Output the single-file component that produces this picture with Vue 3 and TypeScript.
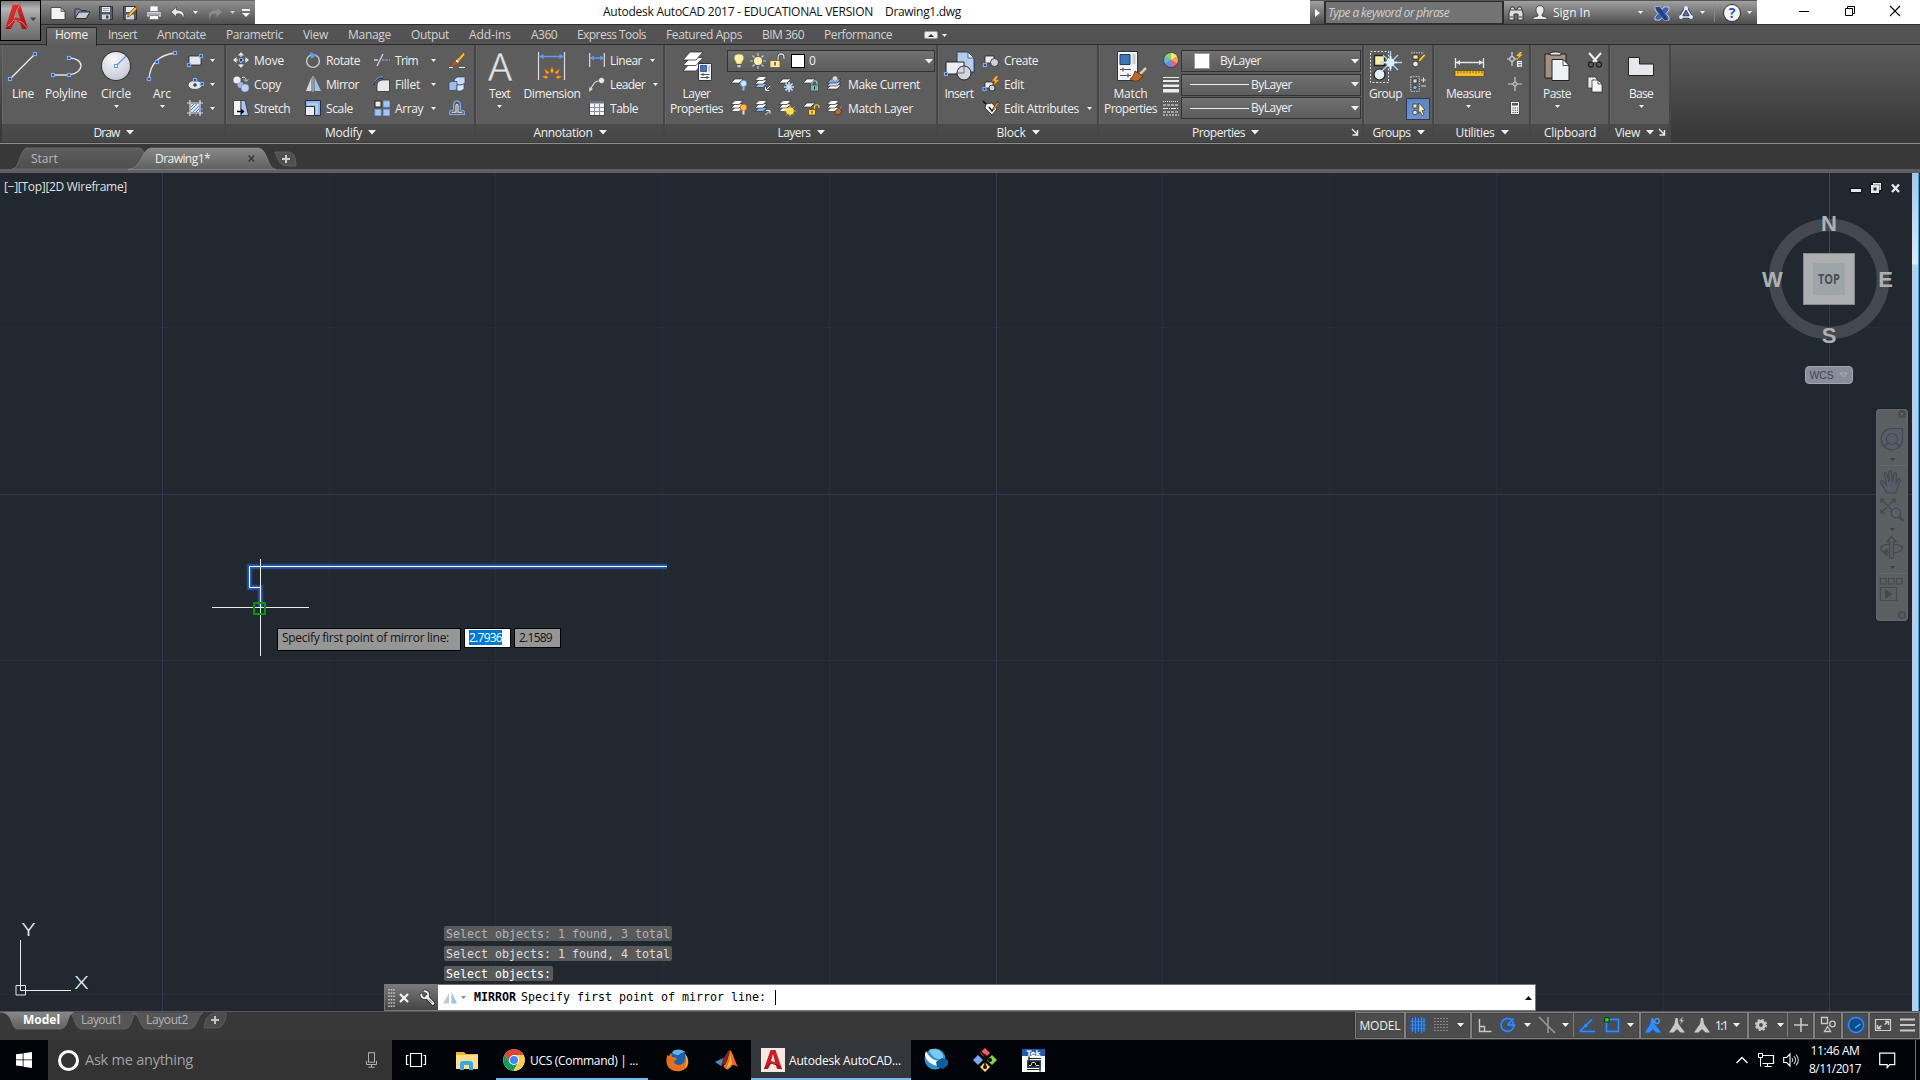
<script setup lang="ts">
import { h } from 'vue'

// Stretches or tightens a label so that it occupies the given width in pixels.
const vFit = {
  mounted(el: HTMLElement, binding: { value: number }) {
    const n = (el.textContent || '').length
    const w = el.getBoundingClientRect().width
    if (n > 0 && binding.value) el.style.letterSpacing = `${(binding.value - w) / n}px`
  },
}

const sq = (x: number, y: number) =>
  `<rect x="${x - 1.5}" y="${y - 1.5}" width="3" height="3" fill="#3a3f4a" stroke="#78aaff" stroke-width="1.2"/>`
const sheet = (x: number, y: number, f = '#fff', w = 8) =>
  `<path d="M${x + 4} ${y}h${w}l-4 4h-${w}z" fill="${f}" stroke="#333" stroke-width=".7"/>`
const sheets = (x: number, y: number, f = '#fff') => sheet(x, y + 7, f) + sheet(x, y + 3.5) + sheet(x, y)

const icons: Record<string, string> = {
  dd: '<path d="M0 0h5L2.5 3z" fill="#f0f0f0"/>',
  ddDark: '<path d="M0 0h5L2.5 3z" fill="#888"/>',
  ddBig: '<path d="M0 0h8L4 4.5z" fill="#f0f0f0"/>',
  launch: '<path d="M1 1l5 5M6.500 2v5h-5" fill="none" stroke="#eee" stroke-width="1.4"/>',
  logo: '<defs><linearGradient id="rg" x1="0" y1="0" x2="1" y2="1"><stop offset="0" stop-color="#e8403c"/><stop offset="1" stop-color="#9a1016"/></linearGradient></defs><path d="M0 26L8 1h7l8 25h-6l-2-6-5-2-4 8z" fill="url(#rg)"/><path d="M9 14L12 6l3 10z" fill="#8c8c8c"/><path d="M0 26l9-9 8 2 6 7M8 1l7 1-3 5-3 9" fill="none" stroke="#f0706a" stroke-width="1"/><path d="M0 26l3-3 3 3z" fill="#8c1014"/>',
  new: '<path d="M1 2.500h10l4 4v8H1z" fill="#f3f4f8" stroke="#333" stroke-width=".8"/><path d="M11 2.500v4h4z" fill="#aeb2bd" stroke="#333" stroke-width=".6"/>',
  open: '<path d="M1 13V4h5l1 1.500h5V8" fill="#7d8797" stroke="#222" stroke-width=".8"/><path d="M1 13.500L5 7h11l-4 6.500z" fill="#c2cddc" stroke="#222" stroke-width=".9"/>',
  save: '<path d="M1.500 1.500h13v13h-13z" fill="#565b66" stroke="#2e3138"/><path d="M4 2h8v5H4z" fill="#e9ebf0"/><path d="M5 3.500h6M5 5.500h6" stroke="#8e939e" stroke-width=".8"/><path d="M4 9.500h8v5H4z" fill="#cfd3db"/><path d="M8 10.500h2.500v3H8z" fill="#3c414b"/>',
  saveas: '<path d="M1.500 1.500h13v13h-13z" fill="#565b66" stroke="#2e3138"/><path d="M4 2h8v5H4z" fill="#e9ebf0"/><path d="M4 9.500h8v5H4z" fill="#cfd3db"/><path d="M5.500 12l1-3L13 2l2 2-7 7z" fill="#f2c13a" stroke="#6b3b10" stroke-width=".7"/><path d="M13 2l2 2 1-1.500L14.500 1z" fill="#e0552b"/>',
  print: '<path d="M4 1h8v6H4z" fill="#fff" stroke="#777" stroke-width=".7"/><path d="M.7 6.500h14.600v5.500H.7z" fill="#d5d8df" stroke="#555" stroke-width=".7"/><path d="M1.500 9h13" stroke="#7f8591"/><path d="M3.500 10.500h9v4h-9z" fill="#f7f7fa" stroke="#666" stroke-width=".7"/>',
  undo: '<path d="M6.500 2L1 7l5.500 5V9c4-.6 6.500.5 6.500 5 2-4 1.500-9-6.500-9z" fill="#e8eaf0" stroke="#333" stroke-width=".6"/>',
  redo: '<path d="M9.500 2L15 7l-5.500 5V9c-4-.6-6.500.5-6.500 5-2-4-1.500-9 6.500-9z" fill="#8c8c8c" stroke="#777" stroke-width=".6"/>',
  qatmore: '<path d="M0 0h8v2H0zM0 4h8L4 8z" fill="#f4f4f4"/>',
  line: `<path d="M3 31L28 6" stroke="#eee" stroke-width="1.300"/>${sq(3, 31)}${sq(28, 6)}`,
  polyline: `<path d="M3 27h16c16-2 16-17 0-17" fill="none" stroke="#e4e4e4" stroke-width="1.400"/>${sq(3, 27)}${sq(19, 27)}${sq(19, 10)}`,
  circle: `<defs><radialGradient id="cg" cx=".4" cy=".25" r=".9"><stop offset="0" stop-color="#f8f8fb"/><stop offset="1" stop-color="#bfc2ce"/></radialGradient></defs><circle cx="16" cy="18" r="15" fill="#333"/><circle cx="16" cy="18" r="14" fill="url(#cg)"/><path d="M16 18L26 8" stroke="#5c98f5" stroke-width="1.200"/><rect x="14.500" y="16.500" width="3" height="3" fill="#fff" stroke="#5c98f5"/>`,
  arc: `<path d="M3 31C4 16 12 7 29 5" fill="none" stroke="#e4e4e4" stroke-width="1.400"/>${sq(3, 31)}${sq(11, 14)}${sq(29, 5)}`,
  rect: `<path d="M2 4h12v9H2z" fill="#e4e6ee" stroke="#222" stroke-width=".8"/>${sq(2, 13)}${sq(14, 4)}`,
  ellipse: `<ellipse cx="8" cy="9" rx="7" ry="4.500" fill="#e4e6ee" stroke="#333" stroke-width=".7"/><path d="M6 9h4M8 7v4" stroke="#111"/>${sq(8, 4)}${sq(15, 8)}`,
  hatch: '<path d="M3 0v16M0 3h16M13 0v16M0 13h16" stroke="#ddd" stroke-width="1.200"/><path d="M4 4h8v8H4z" fill="#dbe7fb"/><path d="M4 10l6-6M6 12l6-6M4 7l3-3M9 12l3-3" stroke="#4d7fd6"/><path d="M8 16l8-8" stroke="#5f9bff"/>',
  move: '<path d="M8 0l3 3.500H5zM8 16l-3-3.500h6zM0 8l3.500-3v6zM16 8l-3.500 3V5z" fill="#e6e6e6"/><path d="M8 3v10M3 8h10" stroke="#e6e6e6" stroke-dasharray="2 1"/><path d="M6.500 6.500h3v3h-3z" fill="#333" stroke="#78aaff"/>',
  copy: '<circle cx="4" cy="4" r="3.600" fill="#eceef4"/><circle cx="7.500" cy="9" r="3" fill="#9fb6dd"/><circle cx="12" cy="12" r="4" fill="#b9d2f6" stroke="#5f7fb5" stroke-width=".5"/><path d="M9 1.500c3-1 4 1 4 3M11 3.500l2 2 2-2" fill="none" stroke="#ddd"/>',
  stretch: '<path d="M.5.500H8v15H.5z" fill="#f4f5f8" stroke="#222" stroke-width=".7"/><path d="M8 .5h4l3.500 15H8z" fill="#a9c9ec" stroke="#1e2f4d" stroke-width=".8"/><path d="M4 11.500h5" stroke="#000" stroke-width="1.500"/><path d="M8 8.500l3.500 3L8 14.500z"/>',
  rotate: '<circle cx="8" cy="9" r="6.400" fill="none" stroke="#ccc" stroke-width="1.400"/><path d="M5 0l7 3-6 4z" fill="#5f9bf0"/>',
  mirror: '<path d="M6.500 1v14H1z" fill="#d9dadf"/><path d="M9.500 1v14H16z" fill="#9fc1ee"/><path d="M8 0v16" stroke="#eee" stroke-width=".8"/>',
  scale: '<path d="M.5.500h15v15H.5z" fill="#8fb6ea" stroke="#1e2f4d"/><path d="M.5 6.500h9v9h-9z" fill="#e9ebf2" stroke="#333"/><path d="M2 4h10v10" fill="none" stroke="#dbe8fb"/>',
  trim: '<path d="M0 8h4" stroke="#e6e6e6" stroke-width="1.300"/><path d="M8 8h8" stroke="#5f9bff" stroke-width="1.300" stroke-dasharray="2.500 1"/><path d="M3 14L9 2" stroke="#d8d8d8" stroke-width="1.300"/>',
  fillet: '<path d="M3 15.500V10c0-4 3-6 6-6h6.500v11.500z" fill="#e6e8ee" stroke="#222" stroke-width=".7"/><path d="M1 7C2 3 5 1 9 .7" fill="none" stroke="#5f9bff" stroke-width="1.600"/><path d="M0 9c1.500-5 5-7.500 9-7" fill="none" stroke="#222"/>',
  array: '<path d="M1 1h6v6H1z" fill="#e9ebf2" stroke="#222"/><path d="M9.500 1h6v6h-6zM1 9.500h6v6H1zM9.500 9.500h6v6h-6z" fill="#a5c6f5" stroke="#6f9fe6"/>',
  erase: '<path d="M15 0L8 7.500l2 2L16 3z" fill="#f4b72f" stroke="#7a4208" stroke-width=".6"/><path d="M8 7.500l2 2-1.500 1.500-2-2z" fill="#fff"/><path d="M6.500 9l2 2c-.5 3-3 2.500-6 3 0-2 2-4.500 4-5z" fill="#c4491c"/><path d="M0 15.500h4M10 15.500h6" stroke="#eee"/>',
  explode: '<path d="M5 4l3-3h8v6l-3 2H8z" fill="#c5dbf6" stroke="#2f4567" stroke-width=".7"/><path d="M0 7l2-1.500h6V13l-2 1.500H0z" fill="#9dbde8" stroke="#2f4567" stroke-width=".7"/><path d="M8 9h4l3-1v5l-3 2H8z" fill="#d9e7fa" stroke="#2f4567" stroke-width=".7"/>',
  offset: '<path d="M0 14.500h16M.6 14.500v-2c0-1.500 1-2.500 4-2.500V5c0-5.500 6.800-5.500 6.800 0v5c3 0 4 1 4 2.500v2" fill="none" stroke="#78aaff" stroke-width="1.200"/><path d="M2.500 12.300h4.500V6c0-2 2-2 2 0v6.300h4.500" fill="none" stroke="#eee" stroke-width="1.100"/>',
  text: '<text x="16" y="33" text-anchor="middle" font-family="Open Sans" font-size="39" fill="#e0e0e0" stroke="#3c3c3c" stroke-width=".3">A</text>',
  dimension: '<path d="M2.500 4v28M28.500 4v28" stroke="#ddd" stroke-width="1.200"/><path d="M4 8.500h23" stroke="#5f9bff" stroke-width="1.400"/><path d="M3 8.500l4.500-2.500v5zM28 8.500L23.500 6v5z" fill="#5f9bff"/><g fill="#ffb02b" stroke="#d4600f" stroke-width=".7"><path d="M16 19l1.700 4-1.700 2.500-1.700-2.500zM8.500 21l4.500 3-.8 2-2-.5zM23.500 21L19 24l.8 2 2-.5zM6 28.500l5-.7 1 1.500-2 1.500zM26 28.500l-5-.7-1 1.500 2 1.500z"/></g>',
  linear: '<path d="M.7 1v14M15.300 1v14" stroke="#ddd" stroke-width="1.200"/><path d="M2 6h12" stroke="#5f9bff" stroke-width="1.400"/><path d="M1 6l4-2.500v5zM15 6l-4-2.500v5z" fill="#5f9bff"/>',
  leader: '<circle cx="12.500" cy="4.500" r="3" fill="#e8e8ec" stroke="#444" stroke-width=".5"/><path d="M9.500 5C5 5 5 8 2 12" fill="none" stroke="#ddd" stroke-width="1.200"/><path d="M0 16l.5-5 3.500 2z" fill="#ddd"/>',
  table: '<path d="M.5.500h15v15H.5z" fill="#f2f3f6" stroke="#444"/><path d="M.5.500h15v3H.5z" fill="#6c7482"/><path d="M1 7.500h14M1 11.500h14M5.500 4v11M10.500 4v11" stroke="#8b8f98"/>',
  layerprops: '<g stroke="#333" stroke-width=".8" fill="#fff"><path d="M9 15h13l-7 8H2z"/><path d="M9 9.500h13l-7 8H2z"/><path d="M9 4h13l-7 8H2z"/></g><path d="M17.500 15.500h13v17h-13z" fill="#eef1f6" stroke="#333"/><path d="M19.500 17.500h6v6h-6z" fill="#3f74c4" stroke="#1f3a66" stroke-width=".7"/><path d="M27 17.500h2v6h-2z" fill="#c3c9d6"/><path d="M19.500 26.500h9M19.500 29.500h9M22 25v3M26 28v3" stroke="#444" stroke-width=".9"/>',
  bulb: '<path d="M8 1c6 0 5.500 5 3 8l-.5 2h-5L5 9C2.500 6 2 1 8 1z" fill="#fff1a8" stroke="#9c7a2c" stroke-width=".6"/><path d="M5.700 11.500h4.600v2l-1 1.500H6.700l-1-1.500z" fill="#b9c3d6" stroke="#333" stroke-width=".6"/>',
  sun: '<circle cx="8" cy="8" r="4" fill="#fff0b0"/><path d="M8 0v3M8 13v3M0 8h3M13 8h3M2.500 2.500l2 2M11.500 11.500l2 2M13.500 2.500l-2 2M4.500 11.500l-2 2" stroke="#ccc" stroke-width="1.100"/>',
  unlock: '<path d="M9 8V4c0-4 6-4 6 0v2" fill="none" stroke="#333" stroke-width="2.600"/><path d="M9 8V4c0-4 6-4 6 0v2" fill="none" stroke="#e4e4e4" stroke-width="1.300"/><path d="M1 7.500h10v7H1z" fill="#fbe9a0" stroke="#6e5a1e" stroke-width=".8"/><path d="M6 9v3.500" stroke="#333" stroke-width="1.300"/>',
  l1: sheet(0, 3) + '<circle cx="12.500" cy="7.500" r="3.200" fill="#cfe6ff" stroke="#4d87d0" stroke-width=".8"/><path d="M11.500 10.500h2v4h-2z" fill="#8fb9ea"/>',
  l2: sheets(0, .5, '#8fc0ee') + '<path d="M15 10l-4 4M10.500 11v3.500H14" fill="none" stroke="#ddd"/>',
  l3: sheet(0, 3) + '<path d="M10 6v10M5 11h10M6.500 7.500l7 7M13.500 7.500l-7 7" stroke="#bfe0ff" stroke-width="1.700"/>',
  l4: sheet(0, 3) + '<path d="M9 9V7c0-3 5-3 5 0v2" fill="none" stroke="#9fc8c0" stroke-width="1.200"/><path d="M7.500 9h8v6h-8z" fill="#86b3a9" stroke="#2b4b45" stroke-width=".7"/><path d="M11.500 10.500v3" stroke="#234"/>',
  l5: sheet(0, 9, '#fff', 10) + sheet(0, 6, '#cfe0f5', 10) + sheet(0, 3, '#7fb2ee', 10) + '<circle cx="8" cy="2.500" r="2.600" fill="#d5dbe4" stroke="#666" stroke-width=".5"/>',
  m1: sheets(0, .5) + '<circle cx="12.500" cy="7.500" r="3.200" fill="#ffc24a" stroke="#c96a0e" stroke-width=".9"/><path d="M11.500 10.500h2v4h-2z" fill="#f0e0c0"/>',
  m2: sheets(0, .5, '#7fb2ee') + '<path d="M10.500 15l4-4M11 10.500h4V14" fill="none" stroke="#ddd"/>',
  m3: sheets(0, .5) + '<path d="M11 5v12M5 11h12M6.700 6.700l8.600 8.600M15.300 6.700l-8.600 8.600" stroke="#d8a01c" stroke-width="1"/><circle cx="11" cy="11" r="3.800" fill="#ffe24d"/>',
  m4: sheet(0, 3) + '<path d="M11.500 9V7c0-3 4.500-3 4.500 0v1" fill="none" stroke="#f4c842" stroke-width="1.200"/><path d="M5.500 9.500h7v5.500h-7z" fill="#ffd23c" stroke="#5a430b" stroke-width=".8"/><path d="M9 11v2.500" stroke="#432"/>',
  m5: sheets(0, .5) + '<path d="M8 11l4-2.500 3 2.500-3 4-4-1z" fill="#c4692a" stroke="#5a2a0a" stroke-width=".7"/><path d="M11 11l4-5" stroke="#888"/>',
  insert: `<path d="M14 4h11l6 6v14H14z" fill="#b4cdec" stroke="#24344e" stroke-width=".9"/><path d="M25 4v6h6z" fill="#e3edf9" stroke="#24344e" stroke-width=".7"/><path d="M3 14h18v12H3z" fill="#eceef3" stroke="#222"/><circle cx="21" cy="25" r="7" fill="#d4d7df" stroke="#222"/><path d="M21 19v6h-6" fill="none" stroke="#555" stroke-width=".8"/>${sq(3, 26)}`,
  create: `<path d="M2 4h9v7H2z" fill="#eceef3" stroke="#222" stroke-width=".8"/><circle cx="11.500" cy="10.500" r="4" fill="#cdd1da" stroke="#222" stroke-width=".8"/>${sq(2, 13)}`,
  edit: `<path d="M2 6h8v6H2z" fill="#eceef3" stroke="#222" stroke-width=".8"/><circle cx="9" cy="12" r="3" fill="#cdd1da" stroke="#222" stroke-width=".8"/><path d="M13 0l-4 5h3l-1 4 5-5h-3l2-4z" fill="#ffb52b" stroke="#c46a0b" stroke-width=".5"/>${sq(1.500, 13)}`,
  attr: '<path d="M0 1l3 3" stroke="#111" stroke-width="1.500"/><path d="M3 4l6-1 5 6-5 6-7-7z" fill="#f1f2f5" stroke="#222" stroke-width=".8"/><path d="M6 7l3 4 6-9" fill="none" stroke="#222" stroke-width="1.500"/><path d="M10 9l4-6.500 1.500 1L11 10z" fill="#f2a52d" stroke="#6b3b10" stroke-width=".5"/>',
  match: '<path d="M2.500 3.500h20v29h-20z" fill="#f2f4f8" stroke="#333"/><path d="M5 6.500h10v10H5z" fill="#3e74b8" stroke="#1c3d6b"/><path d="M17.500 6h3v10h-3z" fill="#c6ccd8"/><path d="M5 21.500h11M5 27.500h11M8 19.500v4M13 25.500v4" stroke="#555" stroke-width="1.200"/><path d="M31 20l-6 6" stroke="#e4c9a2" stroke-width="2.500"/><path d="M20 23l8 5-5 5c-3 .5-6 0-8-2 3-1.500 4-5 5-8z" fill="#b9692a" stroke="#5c2c09" stroke-width=".8"/>',
  wheel: '<g><path d="M8 8V.5A7.500 7.500 0 0 1 14.500 4.200z" fill="#f7e04b"/><path d="M8 8l6.500-3.800a7.500 7.500 0 0 1 0 7.600z" fill="#f2892f"/><path d="M8 8l6.500 3.800A7.500 7.500 0 0 1 8 15.500z" fill="#d6386b"/><path d="M8 8v7.500a7.500 7.500 0 0 1-6.500-3.700z" fill="#4668d8"/><path d="M8 8l-6.500 3.800a7.500 7.500 0 0 1 0-7.600z" fill="#36a7c9"/><path d="M8 8L1.500 4.200A7.500 7.500 0 0 1 8 .5z" fill="#6cc24a"/></g><circle cx="8" cy="8" r="7.500" fill="#fff" fill-opacity=".22" stroke="#222" stroke-width=".6"/>',
  weights: '<path d="M0 1h16v1H0zM0 4h16v2H0zM0 8.500h16v2.500H0zM0 13h16v3.500H0z" fill="#ececec"/>',
  types: '<g stroke="#ececec" stroke-width="1.100"><path d="M0 1.500h16" stroke-dasharray="1 1"/><path d="M0 5h16" stroke-dasharray="3 1"/><path d="M0 8.500h16" stroke-dasharray="5 1 1 1"/><path d="M0 12h16" stroke-dasharray="3 1"/><path d="M0 15h16" stroke-dasharray="2 1"/></g>',
  group: '<path d="M.5 3.500h18v31H.5z" fill="none" stroke="#ddd" stroke-dasharray="2 1.500"/><path d="M4.500 7.500h10v10h-10z" fill="#f6ec9c" stroke="#222" stroke-width="1.300"/><circle cx="9.500" cy="26.500" r="5.500" fill="#e3edf2" stroke="#222" stroke-width="1.200"/><path d="M20.500 3v20M10 14.500h22M13 7l15 15M28 7L12 23" stroke="#a6d4ff" stroke-width="1.400"/><path d="M20.500 8v13M14 14.500h13" stroke="#fff" stroke-width="1.700"/><circle cx="20.500" cy="14.500" r="4" fill="#d9eeff"/>',
  g1: '<path d="M1 .8h13" stroke="#ccc" stroke-dasharray="1.500 1"/><path d="M3 3h5v4H3z" fill="#f6ec9c" stroke="#222" stroke-width=".7"/><circle cx="5.500" cy="12" r="2.800" fill="#e3edf2" stroke="#222" stroke-width=".7"/><path d="M8 10l1-3 5-5 2 1-5 6z" fill="#f2c13a" stroke="#6b3b10" stroke-width=".6"/>',
  g2: '<path d="M.7.700h8.600v14.600H.7z" fill="none" stroke="#ccc" stroke-dasharray="1.500 1"/><path d="M3 3h4v4H3z" fill="#ddd" stroke="#222" stroke-width=".7"/><circle cx="5" cy="11.500" r="2.300" fill="#7fb0f5" stroke="#222" stroke-width=".7"/><path d="M11 4h5M13.500 1.500v5M11 10h5" stroke="#ddd"/>',
  g3: '<path d="M.7.700h9v14.600h-9z" fill="none" stroke="#5f9bff" stroke-dasharray="1.500 1"/><path d="M3 3h4v4H3z" fill="#f6ec9c" stroke="#222" stroke-width=".7"/><circle cx="5" cy="11.500" r="2.300" fill="#ddd" stroke="#222" stroke-width=".7"/><path d="M9 2l6 7-3 .5 2 4-2 1-2-4-1.500 2z" fill="#fff3bd" stroke="#222" stroke-width=".6"/>',
  measure: '<path d="M2.500 10v10M30.500 10v10M3 14.500h27" stroke="#e6e6e6" stroke-width="1.300"/><path d="M3 14.500l4-2.500v5zM30 14.500L26 12v5z" fill="#e6e6e6"/><path d="M2 22.500h29v6H2z" fill="#f2bd2c" stroke="#5a430b" stroke-width=".7"/><path d="M5 23v2.500M8 23v2M11 23v2.500M14 23v2M17 23v2.500M20 23v2M23 23v2.500M26 23v2M29 23v2.500" stroke="#6b4e08" stroke-width=".8"/>',
  u1: '<path d="M5 0v5M5 9v5M0 7h3M7 7h4" stroke="#ddd" stroke-width="1.100"/><path d="M3 5h4v4H3z" fill="none" stroke="#ddd"/><path d="M13 0L9 4h2.500l-1 3L16 2.500h-2.500L15 0z" fill="#ffb52b"/><path d="M9.500 8.500h6v7h-6z" fill="#f4f4f4" stroke="#333" stroke-width=".6"/><path d="M11 10.500h3.500M11 12.500h3.500M11 14h3.500" stroke="#555" stroke-width=".7"/>',
  u2: '<path d="M8 1v14M1 8h14" stroke="#ccc" stroke-width="1.200"/><circle cx="8" cy="8" r="2" fill="#777" stroke="#ccc"/>',
  u3: '<path d="M3.500 1.500h9v13h-9z" fill="#f0f0f0" stroke="#333" stroke-width=".8"/><path d="M5 3h6v2.500H5z" fill="#555"/><path d="M5.500 8h5.500M5.500 10.300h5.500M5.500 12.500h5.500" stroke="#444" stroke-width="1.100" stroke-dasharray="1.200 1"/>',
  paste: '<path d="M4 6h21v24H4z" fill="#a3907f" stroke="#222"/><path d="M9 7V5.500c0-2 11-2 11 0V7z" fill="#f4f4f4" stroke="#222"/><path d="M11 11.500h11l6 6v15H11z" fill="#f1f2f6" stroke="#222"/><path d="M22 11.500v6h6z" fill="#fff" stroke="#222" stroke-width=".8"/>',
  cut: '<path d="M2 1l9 10M14 1L5 11" stroke="#f0f0f0" stroke-width="2"/><circle cx="4" cy="12.500" r="2.500" fill="none" stroke="#222" stroke-width="1.300"/><circle cx="12" cy="12.500" r="2.500" fill="none" stroke="#222" stroke-width="1.300"/>',
  copyclip: '<path d="M1 1h7l2 2v9H1z" fill="#e9eaee" stroke="#333" stroke-width=".7"/><path d="M5 4h6l4 4v8H5z" fill="#f7f7fa" stroke="#333" stroke-width=".8"/><path d="M11 4v4h4" fill="none" stroke="#333" stroke-width=".8"/>',
  base: '<path d="M3.500 9.500h11v6.500h14v11.500h-25z" fill="#e6e8ee" stroke="#222"/>',
  binoc: '<path d="M1 15V8l2-6h3l1 3h2l1-3h3l2 6v7h-5V9H6v6z" fill="#d8dbe0" stroke="#2a2a2a" stroke-width=".9"/><path d="M1.500 12h4M10.500 12h4M2.500 5h4M9.500 5h4" stroke="#2a2a2a" stroke-width=".9"/>',
  person: '<path d="M8 .7c3 0 4 2 4 4.300 0 2-1 4-2 4.500v1.500l5 1.500v2H1v-2L6 11V9.500C5 9 4 7 4 5 4 2.700 5 .7 8 .7z" fill="#e9ebef" stroke="#333" stroke-width=".8"/>',
  exch: '<path d="M1 2h5l2 2.500L10 2h5v3l-3 3.500 3 3.500v3h-5l-2-2.500L6 15H1v-3l3-3.500L1 5z" fill="#3b62ad" stroke="#dfe5f2" stroke-width=".8"/><path d="M1 2h5l8 13h-4z" fill="#24407e"/>',
  a360: '<path d="M8 2.500L2.500 12h11z" fill="none" stroke="#33487c" stroke-width="3.500" stroke-linejoin="round"/><path d="M8 2.500L2.500 12h11z" fill="none" stroke="#e8ebf3" stroke-width="1.500" stroke-linejoin="round"/><circle cx="8" cy="3" r="2" fill="#e8ebf3"/><circle cx="3" cy="12" r="2" fill="#e8ebf3"/><circle cx="13" cy="12" r="2" fill="#e8ebf3"/>',
  wmin: '<path d="M3 8.500h10" stroke="#000"/>',
  wrest: '<path d="M3.500 5.500h7v7h-7zM5.500 5.500v-2h7v7h-2" fill="none" stroke="#000"/>',
  wclose: '<path d="M3 3l10 10M13 3L3 13" stroke="#000" stroke-width="1.100"/>',
  wrench: '<g fill="none" stroke-linecap="round"><path d="M6.500 6.500l6.500 7" stroke="#2a2a2a" stroke-width="4.500"/><path d="M4.500 1.300a3.500 3.500 0 1 1-3.200 3.200" stroke="#2a2a2a" stroke-width="3.600"/><path d="M6.500 6.500l6.500 7" stroke="#e8eaf0" stroke-width="2.800"/><path d="M4.500 1.300a3.500 3.500 0 1 1-3.200 3.200" stroke="#e8eaf0" stroke-width="2.100"/></g><path d="M9 9.500l3 3.200" stroke="#444" stroke-width=".8"/>',
  taskview: '<path d="M4.500 1.500h11v13h-11zM2.500 3.500h-2v9h2M17.500 3.500h2v9h-2" fill="none" stroke="#fff" stroke-width="1.200"/>',
  win: '<path d="M0 2.300l6.700-.9v6H0zM7.500 1.300L16 0v7.500H7.500zM0 8.300h6.700v6L0 13.400zM7.500 8.300H16V16l-8.500-1.200z" fill="#fff"/>',
  mic: '<rect x="4.500" y=".7" width="6" height="9.500" fill="none" stroke="#b0b0b0"/><path d="M2.500 9v3.500h10V9M7.500 12.500v2.700M4.500 15.200h6" fill="none" stroke="#b0b0b0"/>',
  folder: '<path d="M1 2h8l2 2h12v15H1z" fill="#e8b83a"/><path d="M1 5h22v14H1z" fill="#fbe28a"/><path d="M5 20v-6c0-2 1-3 3-3h7c2 0 3 1 3 3v6h-4v-5H9v5z" fill="#37a9e8"/>',
  chrome: '<circle cx="11" cy="11" r="10.800" fill="#fff"/><path d="M11 .2A10.800 10.800 0 0 0 1.600 5.600L6.400 13.500 11 6h9.600A10.800 10.800 0 0 0 11 .2z" fill="#db4437"/><path d="M1.600 5.600A10.800 10.800 0 0 0 10.500 21.800L15.500 13 6.500 13.500z" fill="#0f9d58"/><path d="M20.500 6A10.800 10.800 0 0 1 10.500 21.800L16 13 11 6z" fill="#ffcd40"/><circle cx="11" cy="11" r="5" fill="#fff"/><circle cx="11" cy="11" r="4" fill="#4285f4"/>',
  firefox: '<circle cx="12" cy="11" r="9.500" fill="#1c5fae"/><path d="M6 3c4-4 11-3 14 1-3-1-6 0-7 2-3 0-5 0-7-3z" fill="#5fb7e8"/><path d="M1 6l2 1 2-3 1 4c3 0 5 1 5 2s-3 1-3 3c1 3 5 4 8 2 3-2 4-6 3-10 5 5 4 12 0 15C12 25-1 22 .5 10z" fill="#e8701a"/><path d="M19 5c4 5 3 12 0 15 2-5 2-9 0-15z" fill="#ffc93a"/>',
  matlab: '<path d="M0 13l8-4 3 3-5 5z" fill="#3f8fc9"/><path d="M8 9c3-1 4-8 7-8l-4 13-5 3z" fill="#7b2b1e"/><path d="M15 1c3 2 5 12 8 17-4-2-5-3-7 0-2 2-3 3-5 2-1-1-2-2-3-3 4-2 5-9 7-16z" fill="#e8692a"/><path d="M15 1c1 6-1 13-4 19 3-1 4-4 6-5z" fill="#f6b03c"/>',
  acad: '<rect width="24" height="24" fill="#f7e8e4"/><path d="M3 21L9.500 2h5L21 21h-5l-1.500-5-4-1.500L7 21z" fill="#c81e25"/><path d="M10 13l2-7 2 8z" fill="#f7e8e4"/><path d="M3 21l7-6 6 2 5 4" stroke="#7d0d12" fill="none"/>',
  blueball: '<circle cx="11" cy="11" r="10.500" fill="#2b93d1"/><path d="M3 3c3-2 9-3 13 0 3 3 4 6 2 8C12 12 7 8 5 2z" fill="#7cc9ef"/><path d="M2 3c3 7 9 10 15 10l-3 5C7 17 1 12 1 6z" fill="#fff"/><path d="M12 14l6-4 6 2v5l-5 4-6-2z" fill="#0c5f9e"/>',
  git: '<path d="M12 0l5 5-5 5-5-5z" fill="#f05f5f"/><path d="M5 7l5 5-5 5-5-5z" fill="#7aa8f8"/><path d="M19 7l5 5-5 5-5-5z" fill="#8cd052"/><path d="M12 14l5 5-5 5-5-5z" fill="#fbd870"/><path d="M8 4l8 8M12 7v12" stroke="#111" stroke-width="1.600"/><circle cx="12" cy="19" r="2" fill="#111"/><circle cx="17" cy="12" r="2" fill="#111"/><circle cx="12" cy="8" r="1.800" fill="#111"/>',
  tek: '<rect width="23" height="23" fill="#fff"/><rect width="23" height="7" fill="#2c57a8"/><text x="11.500" y="6.500" text-anchor="middle" font-family="DejaVu Sans" font-weight="700" font-size="7.500" fill="#fff">Tek</text><path d="M7 9.500h12M5 20.500h12" stroke="#222"/><path d="M7 7.500v4M18 18.500v4" stroke="#222" stroke-width="1.500"/><rect x="5" y="11" width="14" height="8" fill="#2f4a84"/><rect x="6.500" y="12.500" width="11" height="5" fill="#000"/><path d="M7 16.500h2l1-3h3l1 3h3" fill="none" stroke="#f3e53c"/>',
  chev: '<path d="M1.500 8L7 2.500 12.500 8" fill="none" stroke="#fff" stroke-width="1.400"/>',
  net: '<path d="M4.500 3.500h11v8h-11M9.500 11.500v3M6.500 14.500h7" fill="none" stroke="#fff" stroke-width="1.200"/><path d="M.5 1.500h4v4h-4zM2.500 5.500v9" fill="#000" stroke="#fff"/>',
  vol: '<path d="M.7 5.500h3L7 2v12l-3.300-3.500h-3z" fill="none" stroke="#fff" stroke-width="1.100"/><path d="M9 6c1 1.300 1 2.700 0 4M11 4c2 2.500 2 5.500 0 8M13 2.500c3 3.500 3 7.500 0 11" fill="none" stroke="#ccc" stroke-width="1.100"/>',
  action: '<path d="M.7 1.200h15v11.500h-5l-2.500 3v-3H.7z" fill="none" stroke="#fff" stroke-width="1.200"/>',
  sGrid: '<g class="glow" stroke="#2f8dff" stroke-width="1.100"><path d="M2.500 1v14M5.500 0v16M8.500 1v14M11.500 0v16M14 1v14"/><path d="M.5 4.500h15M.5 8h15M.5 11.500h15" stroke-opacity=".75"/></g>',
  sSnap: '<g stroke="#c4c4c4" stroke-width="1" stroke-dasharray="1 2"><path d="M1.500 1.500h14M1.500 4.500h14M1.500 7.500h14M1.500 10.500h14M1.500 13.500h14"/></g>',
  sOrtho: '<path d="M2.500 2v12.500h12M3 9.500h4.500v5" fill="none" stroke="#c8c8c8" stroke-width="1.400"/>',
  sPolar: '<g class="glow" fill="none" stroke="#2f8dff" stroke-width="1.500"><path d="M12 3.500A6.400 6.400 0 1 0 13.800 8.500M7.500 8h8M7.500 8l6-6.500M13 4v4"/></g>',
  sIso: '<path d="M0 0l16 16M9 0v16" stroke="#9a9a9a" stroke-width="1.500"/>',
  sTrack: '<path d="M1 14.500h15M1 14l12-11.500" stroke="#2f8dff" stroke-width="1.500" fill="none" class="glow"/><circle cx="7" cy="8.500" r="1.800" fill="#2f8dff"/>',
  sOsnap: '<path d="M2.500 2.500h12v12h-12z" fill="none" stroke="#2f8dff" stroke-width="1.500" class="glow"/><path d="M.7.700h4.300v4.300H.7z" fill="#1fe01f" stroke="#031" stroke-width="1"/>',
  sAnn1: '<path d="M6.500 1h2l1 6 6.500 8.500h-4.500L8 12l-3.500 3.500H0L5.500 7z" fill="#2f8dff" class="glow"/><circle cx="12" cy="4" r="2.300" fill="#4a4a4a" stroke="#4aa0ff" stroke-width="1.200"/>',
  sAnn2: '<path d="M6.500 1h2l1 6 6.500 8.500h-4.500L8 12l-3.500 3.500H0L5.500 7z" fill="#c8c8c8"/><path d="M13.500 0l-4 4h2.500l-1.500 4 5-5h-2.500l1.500-3z" fill="#c8c8c8" stroke="#555" stroke-width=".7"/>',
  sAnn3: '<path d="M7 1h2l1 6 6 8.500h-4.500L8 12l-3.500 3.500H0L6 7z" fill="#c8c8c8"/>',
  sGear: '<circle cx="8" cy="8" r="3.400" fill="none" stroke="#c8c8c8" stroke-width="3"/><circle cx="8" cy="8" r="5.200" fill="none" stroke="#c8c8c8" stroke-width="1.800" stroke-dasharray="2.300 1.780"/>',
  sPlus: '<path d="M8 1v14M1 8h14" stroke="#c8c8c8" stroke-width="1.600"/>',
  sShapes: '<path d="M1.500.500h6v6h-6z" fill="none" stroke="#c8c8c8" stroke-width="1.300"/><circle cx="12.500" cy="7" r="2.800" fill="none" stroke="#c8c8c8" stroke-width="1.300"/><path d="M7.500 9.500l-3 5h6z" fill="none" stroke="#c8c8c8" stroke-width="1.300"/>',
  sPerf: '<circle cx="8" cy="8" r="7.500" fill="#0d4c86" stroke="#2f8dff" stroke-width="1.300" class="glow"/><path d="M7 11l5.500-4" stroke="#58acff" stroke-width="1.500"/>',
  sFull: '<path d="M.5 2.500h15v11H.5z" fill="none" stroke="#d0d0d0" stroke-width="1.200"/><path d="M9.500 7.500l4-3M13.500 8V4.500H10M6.500 8.500l-4 3M2.500 8v3.500H6" fill="none" stroke="#d0d0d0" stroke-width="1.400"/>',
  sMenu: '<path d="M1 2.500h15M1 8h15M1 13.500h15" stroke="#c8c8c8" stroke-width="1.800"/>',
}

interface IconProps { n: string; w?: number; ht?: number }
const Icon = (p: IconProps) => {
  const w = p.w ?? 16
  const ht = p.ht ?? w
  return h('svg', { width: w, height: ht, viewBox: `0 0 ${w} ${ht}`, innerHTML: icons[p.n], class: 'ic' })
}
Icon.props = ['n', 'w', 'ht']

const menu: [string, number][] = [
  ['Insert', 29], ['Annotate', 49], ['Parametric', 57], ['View', 25], ['Manage', 43], ['Output', 38], ['Add-ins', 42],
  ['A360', 26], ['Express Tools', 69], ['Featured Apps', 76], ['BIM 360', 42], ['Performance', 68],
]

interface Big { icon: string; w: number; l: [string, number][]; dd?: boolean }
interface Item { i: string; t?: string; tw?: number; dd?: boolean; on?: boolean }
interface Col { ml?: number; w: number; mw?: number; gap?: number; items: Item[] }
interface Panel {
  name: string; tw: number; w: number; pad?: number; more?: boolean; launch?: boolean
  big: Big[]; cols: Col[]; kind?: string
}

const panels: Panel[] = [
  {
    name: 'Draw', tw: 26, w: 224, more: true,
    big: [
      { icon: 'line', w: 42, l: [['Line', 22]] },
      { icon: 'polyline', w: 44, l: [['Polyline', 42]] },
      { icon: 'circle', w: 56, l: [['Circle', 30]], dd: true },
      { icon: 'arc', w: 36, l: [['Arc', 18]], dd: true },
    ],
    cols: [{ ml: 7, w: 32, gap: 7, items: [{ i: 'rect', dd: true }, { i: 'ellipse', dd: true }, { i: 'hatch', dd: true }] }],
  },
  {
    name: 'Modify', tw: 37, w: 250, more: true, big: [],
    cols: [
      { ml: 7, w: 72, items: [{ i: 'move', t: 'Move', tw: 30 }, { i: 'copy', t: 'Copy', tw: 27 }, { i: 'stretch', t: 'Stretch', tw: 36 }] },
      { w: 69, items: [{ i: 'rotate', t: 'Rotate', tw: 34 }, { i: 'mirror', t: 'Mirror', tw: 33 }, { i: 'scale', t: 'Scale', tw: 27 }] },
      { w: 75, mw: 28, gap: 8, items: [{ i: 'trim', t: 'Trim', tw: 23, dd: true }, { i: 'fillet', t: 'Fillet', tw: 25, dd: true }, { i: 'array', t: 'Array', tw: 28, dd: true }] },
      { w: 18, items: [{ i: 'erase' }, { i: 'explode' }, { i: 'offset' }] },
    ],
  },
  {
    name: 'Annotation', tw: 59, w: 189, more: true, pad: 4,
    big: [{ icon: 'text', w: 39, l: [['Text', 21]], dd: true }, { icon: 'dimension', w: 66, l: [['Dimension', 57]] }],
    cols: [{ ml: 4, w: 74, gap: 8, items: [{ i: 'linear', t: 'Linear', tw: 32, dd: true }, { i: 'leader', t: 'Leader', tw: 35, dd: true }, { i: 'table', t: 'Table', tw: 28 }] }],
  },
  { name: 'Layers', tw: 33, w: 273, more: true, pad: 1, kind: 'layers', big: [{ icon: 'layerprops', w: 61, l: [['Layer', 28], ['Properties', 53]] }], cols: [] },
  {
    name: 'Block', tw: 29, w: 161, more: true, pad: 3,
    big: [{ icon: 'insert', w: 36, l: [['Insert', 29]] }],
    cols: [{ ml: 6, w: 112, gap: 8, items: [{ i: 'create', t: 'Create', tw: 34 }, { i: 'edit', t: 'Edit', tw: 20 }, { i: 'attr', t: 'Edit Attributes', tw: 75, dd: true }] }],
  },
  { name: 'Properties', tw: 53, w: 265, more: true, launch: true, pad: 1, kind: 'props', big: [{ icon: 'match', w: 61, l: [['Match', 34], ['Properties', 53]] }], cols: [] },
  {
    name: 'Groups', tw: 38, w: 70, more: true, pad: 1,
    big: [{ icon: 'group', w: 41, l: [['Group', 33]] }],
    cols: [{ w: 24, items: [{ i: 'g1' }, { i: 'g2' }, { i: 'g3', on: true }] }],
  },
  {
    name: 'Utilities', tw: 39, w: 97, more: true, pad: 9,
    big: [{ icon: 'measure', w: 51, l: [['Measure', 45]], dd: true }],
    cols: [{ ml: 13, w: 18, items: [{ i: 'u1' }, { i: 'u2' }, { i: 'u3' }] }],
  },
  {
    name: 'Clipboard', tw: 52, w: 79, pad: 6,
    big: [{ icon: 'paste', w: 40, l: [['Paste', 28]], dd: true }],
    cols: [{ ml: 10, w: 18, items: [{ i: 'cut' }, { i: 'copyclip' }] }],
  },
  { name: 'View', tw: 25, w: 61, more: true, launch: true, pad: 6, big: [{ icon: 'base', w: 50, l: [['Base', 24]], dd: true }], cols: [] },
]

const layerRows = [['l1', 'l2', 'l3', 'l4', 'l5'], ['m1', 'm2', 'm3', 'm4', 'm5']]
const layerText: [string, number][] = [['Make Current', 72], ['Match Layer', 65]]

const majorX = [162.5, 996.5, 1829.5]
const minorX = [329.5, 495.5, 662.5, 829.5, 1162.5, 1329.5, 1496.5, 1663.5]
const minorY = [154.5, 487.5, 821.5]

const history: [string, number][] = [
  ['Select objects: 1 found, 3 total', 0.55],
  ['Select objects: 1 found, 4 total', 0.8],
  ['Select objects:', 1],
]

// Status bar groups: [width, entries], every entry being a cell of fixed width.
interface Cell { i?: string; t?: string; w: number; sep?: boolean }
const status: { w: number; cells: Cell[] }[] = [
  { w: 50, cells: [{ t: 'MODEL', w: 48 }] },
  { w: 66, cells: [{ i: 'sGrid', w: 24 }, { i: 'sSnap', w: 22 }, { i: 'dn', w: 17 }] },
  { w: 169, cells: [{ i: 'sOrtho', w: 25 }, { i: 'sPolar', w: 22 }, { i: 'dn', w: 16 }, { i: 'sIso', w: 23 }, { i: 'dn', w: 15 }, { i: 'sTrack', w: 27, sep: true }, { i: 'sOsnap', w: 23 }, { i: 'dn', w: 14 }] },
  { w: 108, cells: [{ i: 'sAnn1', w: 24 }, { i: 'sAnn2', w: 24 }, { i: 'sAnn3', w: 25 }, { t: '1:1', w: 14 }, { i: 'dn', w: 16 }] },
  { w: 66, cells: [{ i: 'sGear', w: 24 }, { i: 'dn', w: 14 }, { i: 'sPlus', w: 26, sep: true }] },
  { w: 28, cells: [{ i: 'sShapes', w: 26 }] },
  { w: 27, cells: [{ i: 'sPerf', w: 25 }] },
  { w: 51, cells: [{ i: 'sFull', w: 25 }, { i: 'sMenu', w: 24 }] },
]
</script>

<template>
  <div class="app">
    <header class="top">
      <div class="appbtn"><Icon n="logo" :w="24" :ht="28" /><Icon class="appdd" n="dd" :w="7" :ht="4" /></div>
      <div class="topmain">
        <div class="title">
          <div class="qat">
            <Icon n="new" /><Icon n="open" /><Icon n="save" /><Icon n="saveas" /><Icon n="print" /><Icon n="undo" />
            <Icon class="d1" n="dd" :w="5" :ht="3" /><Icon class="redo" n="redo" /><Icon class="d2" n="dd" :w="5" :ht="3" /><Icon class="qm" n="qatmore" :w="8" :ht="8" />
          </div>
          <div class="caption"><span v-fit="270">Autodesk AutoCAD 2017 - EDUCATIONAL VERSION</span><span v-fit="76">Drawing1.dwg</span></div>
          <div class="info">
            <div class="infoarrow"><svg width="5" height="8"><path d="M0 0l5 4-5 4z" fill="#fff" /></svg></div>
            <div class="search"><i v-fit="121">Type a keyword or phrase</i></div>
            <Icon class="bn" n="binoc" /><Icon class="ps" n="person" /><span v-fit="36" class="signin">Sign In</span>
            <Icon class="sdd" n="dd" :w="5" :ht="3" /><Icon class="ex" n="exch" /><Icon class="a3" n="a360" /><Icon class="add" n="dd" :w="5" :ht="3" />
            <span class="vsep"></span><span class="help">?</span><Icon class="hdd" n="dd" :w="5" :ht="3" />
          </div>
          <div class="winbtns"><Icon n="wmin" /><Icon n="wrest" /><Icon n="wclose" /></div>
        </div>
        <nav class="menu">
          <div class="home"><span v-fit="33">Home</span></div>
          <span v-for="m in menu" :key="m[0]" v-fit="m[1]" class="mi">{{ m[0] }}</span>
          <span class="pill"><svg width="6" height="3"><path d="M0 3l3-3 3 3z" fill="#333" /></svg></span>
          <Icon n="dd" :w="5" :ht="3" />
        </nav>
      </div>
    </header>

    <div class="ribbon">
      <section v-for="p in panels" :key="p.name" class="panel" :style="{ width: p.w + 'px' }">
        <div class="body" :style="{ paddingLeft: (p.pad || 0) + 'px' }">
          <div v-for="b in p.big" :key="b.icon" class="big" :style="{ width: b.w + 'px' }">
            <Icon :n="b.icon" :w="32" :ht="36" />
            <div class="bl"><span v-for="t in b.l" :key="t[0]" v-fit="t[1]">{{ t[0] }}</span></div>
            <Icon v-if="b.dd" class="bdd" n="dd" :w="5" :ht="3" />
          </div>
          <div v-for="(c, ci) in p.cols" :key="ci" class="col" :style="{ width: c.w + 'px', marginLeft: (c.ml || 0) + 'px' }">
            <div v-for="it in c.items" :key="it.i" class="row" :class="{ on: it.on, grp: p.name === 'Groups' }">
              <Icon :n="it.i" />
              <span v-if="it.t" class="rt" :style="{ minWidth: (c.mw || 0) + 'px' }"><span v-fit="it.tw">{{ it.t }}</span></span>
              <Icon v-if="it.dd" :style="{ marginLeft: (c.gap || 0) + 'px' }" n="dd" :w="5" :ht="3" />
            </div>
          </div>
          <div v-if="p.kind === 'layers'" class="layers">
            <div class="combo lc"><Icon n="bulb" /><Icon n="sun" /><Icon n="unlock" /><span class="swatch"></span><span class="lz">0</span><Icon class="cd" n="ddBig" :w="8" :ht="5" /></div>
            <div v-for="(r, ri) in layerRows" :key="ri" class="row lr">
              <Icon v-for="n in r" :key="n" :n="n" /><span v-fit="layerText[ri][1]">{{ layerText[ri][0] }}</span>
            </div>
          </div>
          <template v-if="p.kind === 'props'">
            <div class="col pi"><div class="row"><Icon n="wheel" /></div><div class="row"><Icon n="weights" :w="16" :ht="17" /></div><div class="row"><Icon n="types" /></div></div>
            <div class="pcombos">
              <div class="combo"><span class="swatch ps2"></span><span v-fit="41" class="by1">ByLayer</span><Icon class="cd" n="ddBig" :w="8" :ht="5" /></div>
              <div class="combo"><span class="rule"></span><span v-fit="41">ByLayer</span><Icon class="cd" n="ddBig" :w="8" :ht="5" /></div>
              <div class="combo"><span class="rule"></span><span v-fit="41">ByLayer</span><Icon class="cd" n="ddBig" :w="8" :ht="5" /></div>
            </div>
          </template>
        </div>
        <footer class="ptitle">
          <div class="pt"><span v-fit="p.tw">{{ p.name }}</span><Icon v-if="p.more" n="ddBig" :w="8" :ht="5" /></div>
          <Icon v-if="p.launch" class="la" n="launch" :w="8" :ht="8" />
        </footer>
      </section>
    </div>

    <div class="filetabs">
      <svg class="tabshape" width="320" height="26" viewBox="0 0 320 26">
        <defs>
          <linearGradient id="ta" x1="0" y1="0" x2="0" y2="1"><stop offset="0" stop-color="#888" /><stop offset="1" stop-color="#606060" /></linearGradient>
          <linearGradient id="tb" x1="0" y1="0" x2="0" y2="1"><stop offset="0" stop-color="#5e5e5e" /><stop offset="1" stop-color="#4e4e4e" /></linearGradient>
        </defs>
        <path d="M12 25C20 24 19 8 26 4h114c6 1 6 20 12 21z" fill="url(#tb)" stroke="#707070" stroke-width=".7" />
        <path d="M128 25.500C142 25 142 4 151 4h107c10 0 9 21 18 21.500z" fill="url(#ta)" stroke="#999" stroke-width=".5" />
        <path d="M275 8h13c5 0 8 4 8 14h-9c-7 0-9-6-12-14z" fill="#505050" stroke="#686868" stroke-width=".7" />
        <path d="M286 11v8M282 15h8" stroke="#ccc" stroke-width="2" />
        <path d="M248.500 11.500l5.500 6M254 11.500l-5.500 6" stroke="#3a3a3a" stroke-width="1.700" />
      </svg>
      <span v-fit="24" class="ft1">Start</span><span v-fit="55" class="ft2">Drawing1*</span>
    </div>

    <main class="stage">
      <div class="canvas">
        <svg class="draw" width="1912" height="838">
          <g stroke="#262e3b"><path v-for="x in minorX" :key="x" :d="`M${x} 0V838`" /><path v-for="y in minorY" :key="y" :d="`M0 ${y}H1912`" /></g>
          <g stroke="#303a4d"><path v-for="x in majorX" :key="x" :d="`M${x} 0V838`" /><path d="M0 321.500H1912" /></g>
          <g fill="none">
            <path d="M667 393.500H249.500V414.500H260.500V435" stroke="#2450a0" stroke-width="6" opacity=".45" />
            <path d="M667 393.500H249.500V414.500H260.500V435" stroke="#2b62c8" stroke-width="4" opacity=".8" />
            <path d="M667 393.500H249.500V414.500H260.500V435" stroke="#fff" />
            <path d="M260.500 386V483M212 434.500H309" stroke="#e8eaec" />
            <rect x="254" y="430" width="11" height="11" stroke="#009a00" stroke-width="2" />
            <path d="M20.500 767V817.500H71M16 812.500h9.500v9.500H16z" stroke="#e8e8e8" />
          </g>
          <g font-family="Lato" font-weight="300" font-size="18.500" fill="#fff" stroke="#fff" stroke-width=".2" text-anchor="middle"><text x="28.500" y="763" textLength="13" lengthAdjust="spacingAndGlyphs">Y</text><text x="81.500" y="816" textLength="13.500" lengthAdjust="spacingAndGlyphs">X</text></g>
          <g>
            <circle cx="1829" cy="106" r="54" fill="none" stroke="#444950" stroke-width="12.500" />
            <rect x="1803.500" y="80.500" width="51" height="51" fill="#acaeb0" stroke="#83898c" /><rect x="1813" y="90" width="32" height="32" fill="#9ea5a9" />
            <path d="M1829.500 0V131" stroke="#a8adb8" opacity=".15" />
            <text x="1829" y="111" text-anchor="middle" font-family="Open Sans" font-weight="700" font-size="14" textLength="22" lengthAdjust="spacingAndGlyphs" fill="#494e57">TOP</text>
            <g font-family="Liberation Sans" font-weight="700" font-size="22" fill="#aeb0b2" text-anchor="middle"><text x="1829" y="58">N</text><text x="1829" y="170">S</text><text x="1772.500" y="114">W</text><text x="1885.500" y="114">E</text></g>
            <rect x="1805.500" y="193.500" width="47" height="17" rx="3.500" fill="#898c9a" stroke="#a2a4ae" />
            <text x="1809.500" y="206" font-family="Liberation Sans" font-size="11" textLength="24" lengthAdjust="spacingAndGlyphs" fill="#41454e">WCS</text>
            <path d="M1840 200h7l-3.500 4z" fill="none" stroke="#b2b4be" stroke-width=".8" />
          </g>
          <g>
            <rect x="1875.500" y="235.500" width="33" height="213" rx="4" fill="#171c22" /><rect x="1876.500" y="236.500" width="31" height="211" rx="2.500" fill="#5a5f62" stroke="#65696c" />
            <circle cx="1902" cy="241" r="4" fill="#484c50" /><path d="M1900.500 239.500l3 3M1903.500 239.500l-3 3" stroke="#666" />
            <circle cx="1902" cy="442" r="4" fill="#484c50" /><path d="M1900 441h4M1900 443h4" stroke="#666" />
            <g transform="translate(0 -3)">
              <g fill="none" stroke="#45494f" stroke-width="1.200">
                <path d="M1892 258.500h10.500V269a10.700 10.700 0 1 1-10.500-10.500z" fill="#565c68" /><circle cx="1892" cy="269" r="5.500" /><path d="M1888 273l-4 4M1896 273l4 4" />
                <path d="M1887 323l-6.500-11c0-2 2-2 3 0l3 3-2-11c0-2 2-2 2.500 0l2 8 0-10c0-2 2.500-2 2.500 0l1 10 1.500-8c.5-2 2.500-1 2.500 0l-.5 10 2-5c1-1 2.500-.5 2 1l-3 10-2 3z" fill="#565c68" />
                <path d="M1881 329l14 14M1895 329l-14 14M1881 333v-4h4M1891 329h4v4M1881 339v4h4" /><circle cx="1896" cy="343" r="4.800" fill="#5a6068" /><path d="M1899.500 347l4 4" stroke-width="2.500" />
                <ellipse cx="1891.500" cy="378.500" rx="11" ry="4.500" /><path d="M1889.500 388v-16.500h-2.500l4.500-5 4.500 5h-2.500V388z" fill="#5a5f62" /><path d="M1883 382l4-2.500v6z" fill="#45494f" />
                <path d="M1880.500 408.500h5.500v5.500h-5.500zM1888.500 408.500h5.500v5.500h-5.500zM1896.500 408.500h5.500v5.500h-5.500zM1880.500 417.500h16v13h-16z" /><path d="M1885.500 420l6 4-6 4z" fill="#45494f" />
              </g>
              <path d="M1890 288h5l-2.500 3zM1890 358h5l-2.500 3zM1890 396h5l-2.500 3z" fill="#3c4046" />
              <path d="M1879 295.500h27M1879 403.500h27" stroke="#666a6e" />
            </g>
          </g>
          <g stroke="#11161b" stroke-width="2.500" paint-order="stroke" fill="#e6e8ea"><rect x="1851" y="16" width="10" height="3" /><path d="M1871 12h2v-2h8v7h-2v3h-8z" /></g>
          <path d="M1873.500 14.500h3v3h-3z" fill="#20272f" /><path d="M1873.500 11.800h6.200v5.500" fill="none" stroke="#59616a" stroke-width=".7" />
          <path d="M1892 11.500l7 7.500M1899 11.500l-7 7.500" stroke="#e6e8ea" stroke-width="2.400" />
        </svg>
        <span v-fit="123" class="vp">[−][Top][2D Wireframe]</span>
        <div class="tip t1"><span v-fit="167">Specify first point of mirror line:</span></div>
        <div class="tip t2"><span v-fit="33" class="sel">2.7936</span></div>
        <div class="tip t3"><span v-fit="33">2.1589</span></div>
        <div class="cmd">
          <div class="hist"><span v-for="x in history" :key="x[0]" :style="{ color: `rgba(255,255,255,${x[1]})` }">{{ x[0] }}</span></div>
          <div class="cmdbar">
            <div class="grip">
              <svg width="7" height="18"><path d="M1 0v18M3.500 0v18M6 0v18" stroke="#c8c8c8" stroke-width="1.500" stroke-dasharray="1.500 1.800" /></svg>
              <svg width="10" height="10"><path d="M1 1l8 8M9 1L1 9" stroke="#f2f2f2" stroke-width="2.200" /></svg>
              <Icon class="wr" n="wrench" />
            </div>
            <div class="cin">
              <svg width="15" height="12"><path d="M0 11.500L6 1v10.500z" fill="#c2c8d2" /><path d="M8.500 0l5.500 11.500H8.500z" fill="#9dc3ec" /></svg>
              <Icon class="cdd" n="ddDark" :w="6" :ht="3" /><b>MIRROR</b><span>Specify first point of mirror line: </span><i class="caret"></i>
              <svg class="up" width="7" height="4"><path d="M0 4l3.500-4L7 4z" fill="#111" /></svg>
            </div>
          </div>
        </div>
      </div>
      <div class="edge"></div>
    </main>

    <div class="bottom">
      <div class="ltabs">
        <svg class="ltshape" width="232" height="20">
          <path d="M68 1C76 2 73 17 82 17h42c9 0 7-14 13-16zM132 1c9 1 7 16 15 16h42c9 0 8-14 14-16z" fill="#555" stroke="#686868" stroke-width=".7" />
          <path d="M0 0C14 1 10 17 18 17h42c9 0 7-16 14-17z" fill="url(#ta)" stroke="#888" stroke-width=".5" />
          <path d="M204 16c1-9 5-15 11-15h11c0 8-3 15-10 15z" fill="#4c4c4c" stroke="#666" stroke-width=".7" /><path d="M215 4v8M211 8h8" stroke="#c4c4c4" stroke-width="2" />
        </svg>
        <b v-fit="34">Model</b><span v-fit="41">Layout1</span><span v-fit="42">Layout2</span>
      </div>
      <div class="status">
        <div v-for="(g, gi) in status" :key="gi" class="sg" :style="{ width: g.w + 'px' }">
          <div v-for="(c, i) in g.cells" :key="i" class="sc" :class="{ sep: c.sep }" :style="{ width: c.w + 'px' }">
            <span v-if="c.t" v-fit="c.t === 'MODEL' ? 41 : 12">{{ c.t }}</span>
            <svg v-else-if="c.i === 'dn'" width="7" height="4"><path d="M0 0h7L3.500 4z" fill="#f2f2f2" /></svg>
            <Icon v-else :n="c.i" />
          </div>
        </div>
      </div>
    </div>

    <div class="taskbar">
      <div class="start"><Icon n="win" /></div>
      <div class="ask"><i class="ring"></i><span v-fit="108">Ask me anything</span><Icon class="mic" n="mic" /></div>
      <div class="tb w48"><Icon n="taskview" :w="20" :ht="16" /></div>
      <div class="tb w56"><Icon n="folder" :w="24" :ht="20" /></div>
      <div class="tb run chr"><Icon n="chrome" :w="22" /><span v-fit="108">UCS (Command) | ...</span></div>
      <div class="tb w58"><Icon n="firefox" :w="23" /></div>
      <div class="tb w43"><Icon n="matlab" :w="23" /></div>
      <div class="tb run act"><Icon n="acad" :w="24" /><span v-fit="112">Autodesk AutoCAD...</span></div>
      <div class="tb w49"><Icon n="blueball" :w="24" /></div>
      <div class="tb w49"><Icon n="git" :w="24" /></div>
      <div class="tb w49"><Icon n="tek" :w="23" /></div>
      <div class="tray">
        <Icon n="chev" :w="14" :ht="10" /><Icon n="net" /><Icon n="vol" />
        <div class="clock"><span v-fit="49">11:46 AM</span><span v-fit="52">8/11/2017</span></div>
        <Icon n="action" :w="17" /><i class="peek"></i>
      </div>
    </div>
  </div>
</template>

<style>
body { margin: 0; background: #212830; overflow: hidden; }
.glow { filter: drop-shadow(0 0 1.5px #1a62d0); }
</style>

<style scoped>
* { box-sizing: border-box; }
.app { width: 1920px; height: 1080px; display: flex; flex-direction: column; overflow: hidden; font: 12px/15px "Open Sans", "Noto Sans", sans-serif; color: #f0f0f0; white-space: pre; }
.ic { display: block; flex: none; overflow: visible; }
svg { display: block; flex: none; }

.top { height: 45px; display: flex; background: #535353; border-bottom: 1px solid #2b2b2b; }
.appbtn { width: 41px; height: 41px; border: 1px solid #000; background: linear-gradient(#7c7c7c, #b4b4b4 20%, #8a8a8a 55%, #6a6a6a); display: flex; padding: 2px 0 0 4px; }
.appdd { margin: 15px 0 0 2px; transform: scale(1.3, 1.2); filter: invert(.75); }
.topmain { flex: 1; display: flex; flex-direction: column; }
.title { height: 24px; display: flex; background: #fff; }
.qat { width: 214px; border-top: 1px solid #666; background: linear-gradient(#8f8f8f, #505050); display: flex; align-items: center; padding-left: 9px; gap: 8px; }
.qat .d1 { margin-left: -1px; }
.qat .redo { margin-left: 1px; }
.qat .d2 { margin-left: -1px; opacity: .7; }
.qat .qm { margin-left: -1px; }
.caption { display: flex; gap: 12px; width: 1055px; padding: 4px 0 0 348px; color: #111; }
.info { width: 447px; border-top: 1px solid #555; background: linear-gradient(#a0a0a0, #4d4d4d); display: flex; align-items: center; }
.infoarrow { width: 14px; display: flex; justify-content: center; }
.search { width: 180px; height: 23px; border: 1px solid #2c2c2c; border-width: 1px 2px; background: #737373; color: #d0d0d0; padding: 3px 0 0 2px; }
.bn { margin-left: 4px; }
.ps { margin-left: 8px; }
.signin { margin-left: 5px; width: 36px; }
.sdd { margin-left: 49px; }
.ex { margin-left: 11px; }
.a3 { margin-left: 8px; }
.add { margin-left: 6px; }
.vsep { width: 1px; height: 18px; background: #888; margin-left: 9px; }
.help { width: 16px; height: 16px; margin-left: 9px; border-radius: 50%; background: #f4f4f6; color: #2a55b8; font: 700 14px/16px "Open Sans"; text-align: center; box-shadow: 0 0 0 1px #333; }
.hdd { margin-left: 7px; }
.winbtns { flex: 1; display: flex; justify-content: space-between; padding: 3px 17px 0 39px; }
.menu { flex: 1; border-top: 1px solid #2b2b2b; display: flex; padding-left: 5px; color: #d2d2d2; }
.home { width: 51px; height: 19px; margin-top: 2px; border: 1px solid #262626; border-bottom: 0; border-radius: 2px 2px 0 0; background: linear-gradient(#6f6f6f, #5d5d5d); color: #f2f2f2; padding-left: 8px; line-height: 14px; position: relative; z-index: 1; }
.mi { margin: 2px 0 0 20px; white-space: pre; }
.home + .mi { margin-left: 11px; }
.pill { width: 14px; height: 8px; margin: 6px 4px 0 32px; border-radius: 2px; background: #eee; border: 1px solid #999; display: flex; align-items: center; justify-content: center; }
.menu > .ic { margin-top: 9px; }

.ribbon { height: 99px; display: flex; padding-left: 2px; background: linear-gradient(#5c5c5c, #393939 90%); border-bottom: 1px solid #8c8c8c; box-shadow: inset 0 -1px #3c3c3c; }
.panel { height: 97px; display: flex; flex-direction: column; flex: none; background: #5d5d5d; border-right: 2px solid #464646; box-shadow: inset 1px 0 #666; }
.body { height: 79px; padding-top: 3px; display: flex; }
.big { display: flex; flex-direction: column; align-items: center; flex: none; }
.bl { display: flex; flex-direction: column; align-items: center; margin-top: 2px; }
.bdd { margin-top: 4px; }
.col { display: flex; flex-direction: column; flex: none; }
.row { height: 24px; display: flex; align-items: center; }
.rt { margin-left: 5px; }
.row.grp { padding-left: 4px; }
.row.on { width: 24px; height: 22px; margin-top: 2px; background: linear-gradient(#5f83be, #7090c6); border: 1px solid #2b3a55; padding-left: 3px; }
.ptitle { height: 18px; background: linear-gradient(#4b4b4b, #464646); display: flex; align-items: center; padding-bottom: 2px; }
.pt { flex: 1; display: flex; align-items: center; justify-content: center; gap: 6px; padding-left: 1px; }
.la { margin-right: 3px; }
.combo { height: 22px; background: linear-gradient(#707070, #5c5c5c); border: 1px solid #333; display: flex; align-items: center; }
.cd { margin-left: auto; margin-right: 1px; }
.layers { width: 208px; }
.layers .combo { margin-top: 2px; padding-left: 3px; gap: 3px; }
.swatch { width: 14px; height: 14px; background: #fff; border: 1px solid #000; margin-left: 3px; }
.lz { margin-left: 1px; }
.combo > span { margin-top: -1px; }
.lr { padding-left: 4px; gap: 8px; }
.lr span { margin-left: -3px; }
.pi { width: 18px; margin-left: 2px; }
.pcombos { width: 180px; display: flex; flex-direction: column; padding-top: 2px; gap: 1.5px; }
.ps2 { width: 16px; height: 16px; margin-left: 12px; border-color: #999; }
.by1 { margin-left: 10px; }
.combo .rule { width: 59px; height: 1px; background: #eee; margin: 0 2px 0 8px; }

.filetabs { height: 29px; display: flex; background: #383838; border-bottom: 4px solid #606060; position: relative; padding-top: 7px; }
.tabshape, .ltshape { position: absolute; left: 0; top: 0; }
.ft1, .ft2 { position: relative; }
.ft1 { margin-left: 31px; width: 24px; color: #b8b8b8; }
.ft2 { margin-left: 100px; }

.stage { height: 838px; display: flex; background: #000; }
.canvas { width: 1912px; position: relative; background: #212830; }
.edge { width: 7px; background: linear-gradient(#a9c6e6, #e0e9f4 91px, #b7cfe9 92px); border-right: 1px solid #1db8e8; }
.draw { position: absolute; left: 0; top: 0; }
.vp { position: absolute; left: 4px; top: 6px; color: #e0e0e0; }
.tip { position: absolute; top: 455px; height: 20px; border: 1px solid #000; background: #969696; color: #151515; padding: 1px 0 0 4px; }
.t1 { left: 277px; width: 184px; height: 23px; }
.t2 { left: 464px; width: 47px; background: #fff; }
.t3 { left: 514px; width: 47px; }
.sel { display: inline-block; background: #0078d7; color: #fff; }
.cmd { position: absolute; left: 384px; top: 753px; width: 1152px; font: 11.63px/15px "DejaVu Sans Mono", monospace; }
.hist { display: flex; flex-direction: column; align-items: flex-start; gap: 5px; padding-left: 60px; height: 58px; }
.hist span { background: #58595b; border-radius: 2px; padding: 0 2px; height: 15px; line-height: 16px; }
.cmdbar { height: 27px; display: flex; background: #fff; border: 1px solid #777; }
.grip { width: 53px; background: linear-gradient(#7a7a7a, #444); display: flex; align-items: center; padding-left: 3px; }
.grip svg:nth-child(2) { margin: 0 11px 0 4px; }
.cin { flex: 1; display: flex; align-items: center; color: #000; padding-left: 5px; }
.cdd { margin: 0 7px 0 3px; }
.cin b { margin-right: 5px; }
.caret { width: 1px; height: 15px; background: #000; margin-left: 2px; }
.up { margin: 0 3px 0 auto; }

.bottom { height: 29px; display: flex; justify-content: space-between; background: #383838; border-top: 1px solid #585858; }
.ltabs { display: flex; position: relative; padding: 0 0 0 23px; color: #b4b4b4; }
.ltabs b, .ltabs span { position: relative; }
.ltabs b { color: #fff; margin-right: 24px; width: 34px; }
.ltabs span { margin-right: 24px; }
.status { display: flex; background: #303030; padding: 0 0 0 1px; }
.sg { height: 27px; background: #4c4c4c; border: 1px solid #808080; display: flex; padding-bottom: 1px; box-shadow: inset 0 0 0 1px #444; }
.sc { display: flex; align-items: center; justify-content: center; flex: none; }
.sc.sep { border-left: 1px solid #7c7c7c; }

.taskbar { height: 40px; display: flex; background: #020409; color: #fff; }
.start { width: 48px; display: flex; align-items: center; justify-content: center; }
.ask { width: 344px; background: #333; display: flex; align-items: center; padding-left: 10px; color: #a2a2a2; font-size: 14.5px; line-height: 20px; }
.ring { width: 21px; height: 21px; border: 3px solid #fff; border-radius: 50%; margin-right: 6px; }
.ask .mic { margin-left: auto; margin-right: 12px; }
.tb { display: flex; align-items: center; justify-content: center; flex: none; }
.w48 { width: 48px; }
.w49 { width: 49px; }
.w56 { width: 54px; margin-right: 2px; }
.w58 { width: 58px; }
.w43 { width: 41px; margin-right: 4px; }
.run { border-bottom: 2px solid #76b9ed; padding-top: 2px; justify-content: flex-start; gap: 5px; }
.chr { width: 152px; padding-left: 7px; }
.act { width: 160px; padding-left: 10px; gap: 4px; background: #33363b; }
.tray { margin-left: auto; display: flex; align-items: center; }
.tray .ic { margin-right: 9px; }
.clock { width: 54px; display: flex; flex-direction: column; align-items: center; line-height: 18px; margin: 0 17px 0 0; }
.tray .clock + .ic { margin-right: 19px; margin-left: 0; }
.peek { width: 1px; height: 40px; background: #777; margin-right: 4px; }
</style>
